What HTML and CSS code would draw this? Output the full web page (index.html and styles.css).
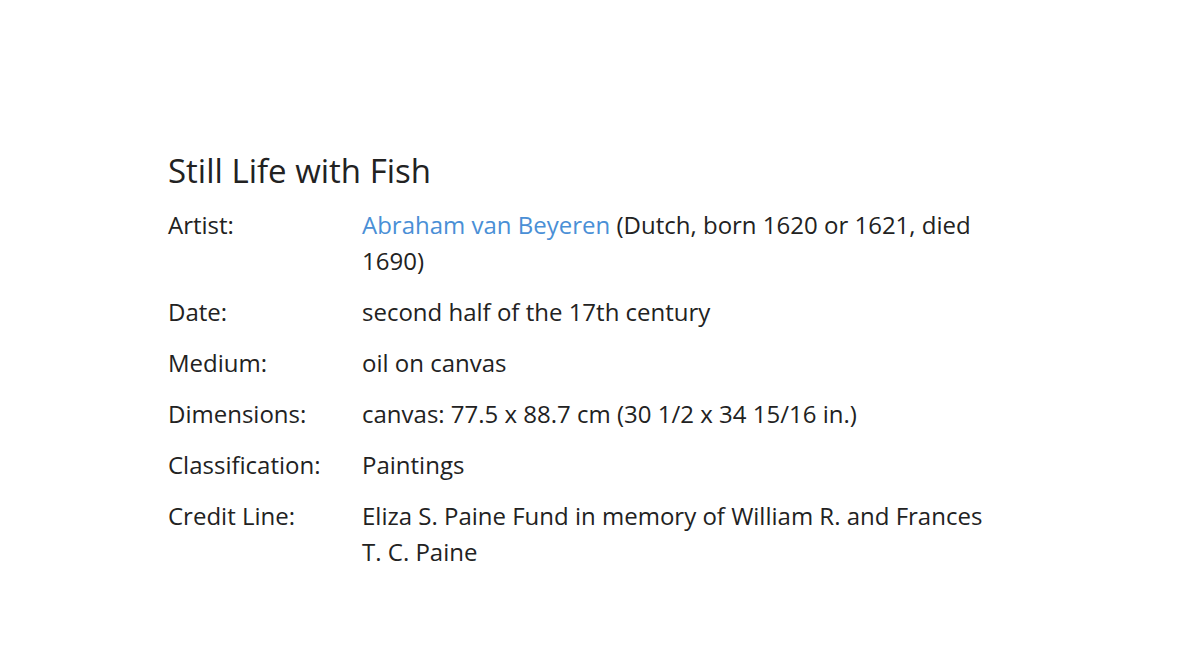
FILE: index.html
```html
<!DOCTYPE html>
<html>
<head>
<meta charset="utf-8">
<link rel="stylesheet" href="styles.css">
</head>
<body>
<main class="artwork">
  <h1 class="title">Still Life with Fish</h1>
  <dl class="details">
    <div class="row"><dt>Artist:</dt><dd><a href="#">Abraham van Beyeren</a> (Dutch, born 1620 or 1621, died 1690)</dd></div>
    <div class="row"><dt>Date:</dt><dd>second half of the 17th century</dd></div>
    <div class="row"><dt>Medium:</dt><dd>oil on canvas</dd></div>
    <div class="row"><dt>Dimensions:</dt><dd>canvas: 77.5 x 88.7 cm (30 1/2 x 34 15/16 in.)</dd></div>
    <div class="row"><dt>Classification:</dt><dd>Paintings</dd></div>
    <div class="row"><dt>Credit Line:</dt><dd>Eliza S. Paine Fund in memory of William R. and Frances T. C. Paine</dd></div>
  </dl>
</main>
</body>
</html>
```
FILE: styles.css
```css
html, body {
  margin: 0;
  padding: 0;
  background: #fff;
}
body {
  font-family: "Open Sans", sans-serif;
  color: #222;
}
.artwork {
  width: 841px;
  margin: 0 auto;
  padding-top: 148px;
}
.title {
  margin: 0 0 13px;
  font-size: 33px;
  font-weight: 400;
  line-height: 46px;
}
.details {
  margin: 0;
  display: flex;
  flex-direction: column;
  gap: 15px;
}
.row {
  display: grid;
  grid-template-columns: 194px 1fr;
  font-size: 24px;
  line-height: 36px;
}
dt, dd {
  margin: 0;
}
dd {
  padding-right: 20px;
}
a {
  color: #4a8fd6;
  text-decoration: none;
}
```
